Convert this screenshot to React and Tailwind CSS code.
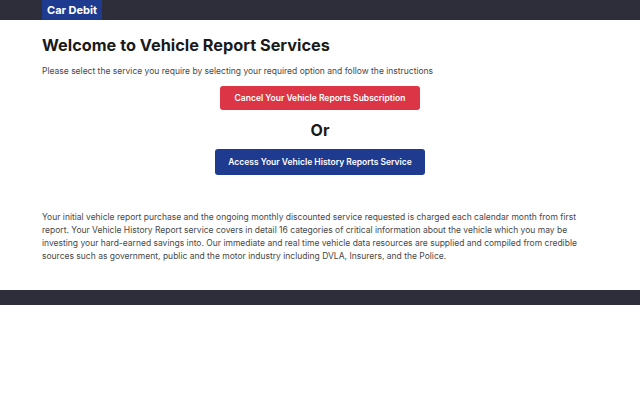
export default function App() {
    return (
        <div className="w-[640px] min-h-[400px] bg-white" style={{ fontFamily: 'Inter, "Open Sans", sans-serif' }}>
            {/* Header */}
            <div className="h-[20px] bg-[#2d2e39]">
                <div className="mx-[42px] flex h-full">
                    <div className="bg-[#1f3b8f] px-[5px] flex items-center text-white font-bold text-[11px]">Car Debit</div>
                </div>
            </div>

            <div className="mx-[42px] pt-[15px] pb-[27px]">
                <h1 className="text-[16.3px] font-bold text-[#1a1a1a] leading-[20px]">Welcome to Vehicle Report Services</h1>
                <p className="mt-[11px] text-[8.5px] text-[#484848] leading-[11px]">Please select the service you require by selecting your required option and follow the instructions</p>

                <div className="flex flex-col items-center">
                    <button className="mt-[9px] w-[200px] h-[24px] rounded-[3px] bg-[#dc3545] text-white text-[8.5px] font-semibold">Cancel Your Vehicle Reports Subscription</button>
                    <div className="mt-[10px] text-[16px] font-bold text-[#1a1a1a] leading-[20px]">Or</div>
                    <button className="mt-[9px] w-[210px] h-[26px] rounded-[3px] bg-[#1f3b8f] text-white text-[8.5px] font-semibold">Access Your Vehicle History Reports Service</button>
                </div>

                <p className="mt-[36px] text-[8.5px] text-[#484848] leading-[13px]">
                    Your initial vehicle report purchase and the ongoing monthly discounted service requested is charged each calendar month from first report. Your Vehicle History Report service covers in detail 16 categories of critical information about the vehicle which you may be investing your hard-earned savings into. Our immediate and real time vehicle data resources are supplied and compiled from credible sources such as government, public and the motor industry including DVLA, Insurers, and the Police.
                </p>
            </div>

            <div className="h-[15px] bg-[#2d2e39]"></div>
        </div>
    );
}
